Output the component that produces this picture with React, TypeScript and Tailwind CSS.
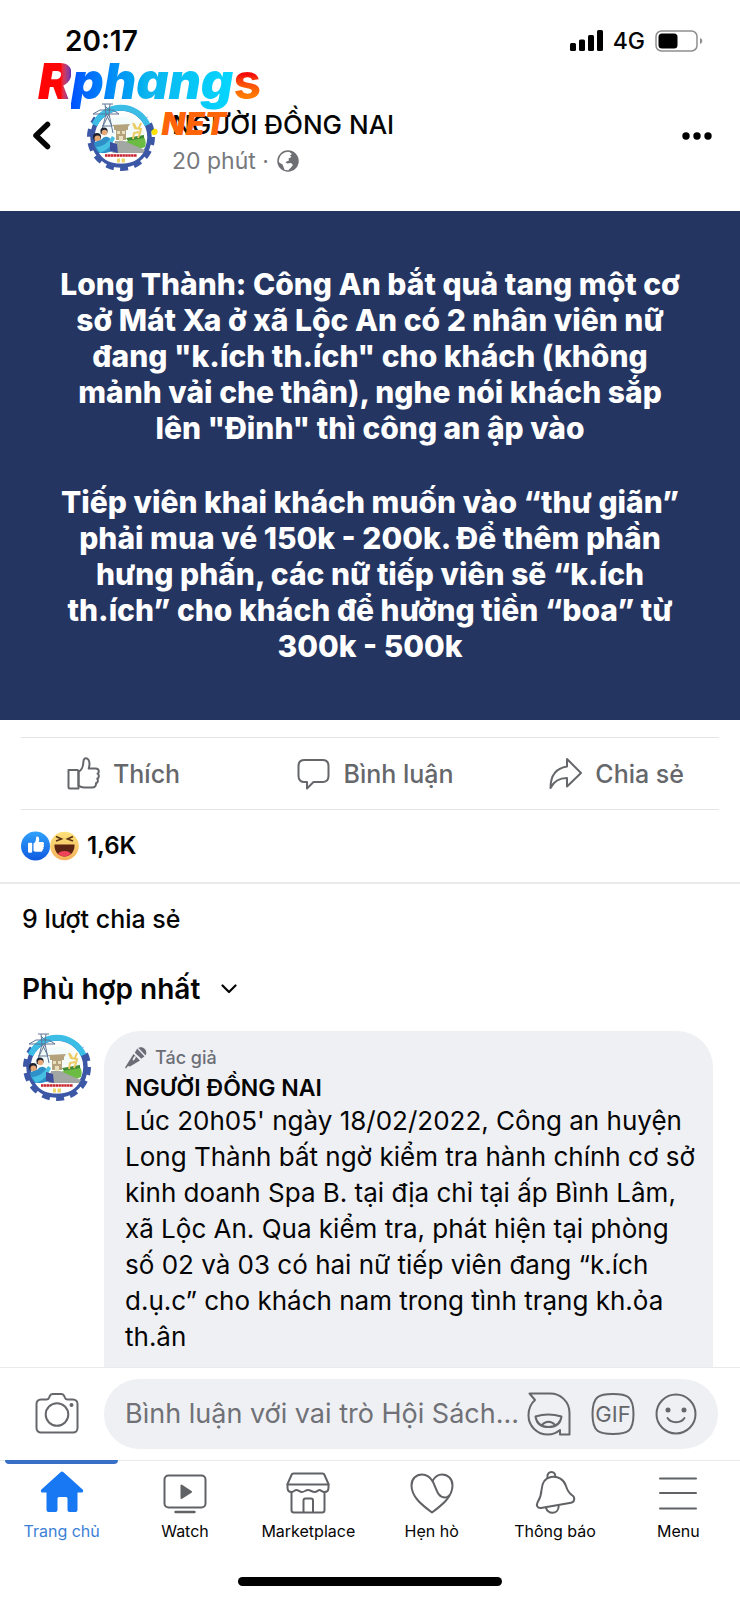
import type { ReactNode } from 'react'

const TABS = [
  { label: 'Trang chủ', icon: <HomeIcon />, active: true },
  { label: 'Watch', icon: <WatchIcon /> },
  { label: 'Marketplace', icon: <MarketIcon /> },
  { label: 'Hẹn hò', icon: <HeartIcon /> },
  { label: 'Thông báo', icon: <BellIcon /> },
  { label: 'Menu', icon: <MenuIcon /> },
]

type IconProps = {
  size: string
  box: string
  strokeWidth?: number
  children: ReactNode
}

function Icon({ size, box, strokeWidth = 2, children }: IconProps) {
  return (
    <svg
      className={`${size} shrink-0`}
      viewBox={box}
      fill="none"
      stroke="currentColor"
      strokeWidth={strokeWidth}
      strokeLinecap="round"
      strokeLinejoin="round"
      aria-hidden="true"
    >
      {children}
    </svg>
  )
}

function HomeIcon() {
  return (
    <Icon size="size-11" box="0 0 44 44">
      <path
        d="M20.5 1.2a2.4 2.4 0 0 1 3 0L42.6 18.6c1 1 .6 2.9-1 2.9H37.5V39a2 2 0 0 1-2 2H29.5a2 2 0 0 1-2-2V27.5a1.5 1.5 0 0 0-1.5-1.5H19a1.5 1.5 0 0 0-1.5 1.5V39a2 2 0 0 1-2 2H8.5a2 2 0 0 1-2-2V21.5H2.4c-1.6 0-2-1.9-1-2.9Z"
        fill="currentColor"
        stroke="none"
      />
    </Icon>
  )
}

function WatchIcon() {
  return (
    <Icon size="size-11" box="0 0 44 44">
      <rect x="1.5" y="4.5" width="41" height="32" rx="4" />
      <path d="M12.5 41h19" strokeWidth="2.4" />
      <path d="M18.5 14.5v12.5l9.5-6.2Z" fill="currentColor" />
    </Icon>
  )
}

function MarketIcon() {
  return (
    <Icon size="size-11" box="0 0 44 44">
      <path d="M7.5 2.500h29c1 0 1.800.6 2 1.500L42.500 13v3.500c0 2.500-1.500 4.500-4 4.500s-3.500-2-5-2-2.500 2-5 2-4-2-6.500-2-3.500 2-6 2-3.500-2-5.500-2-3 2-5 2c-2.500 0-4-2-4-4.500V13L5.500 4c.2-.9 1-1.500 2-1.500Z" />
      <path d="M1.500 13.500h41M5.500 21v18a2.500 2.500 0 0 0 2.500 2.500h28a2.500 2.500 0 0 0 2.500-2.500V21M17.500 41V29.500c0-1.200.8-2 2-2H25c1.200 0 2 .8 2 2V41" />
    </Icon>
  )
}

function HeartIcon() {
  return (
    <Icon size="size-11" box="0 0 44 44">
      <path d="M22 41.500C12 34 1.500 26 1.500 14.500 1.500 8 6 3.500 12 3.500c5 0 8 2.500 10.500 6.500C25 5.500 28 3.500 32 3.500c6 0 10.500 4.500 10.500 11C42.500 26 32 34 22 41.500Z" />
      <path d="M22.500 10c3.500 6 4.500 16.500 12.500 16.500 2 0 3.200-.8 4-2" />
    </Icon>
  )
}

function BellIcon() {
  return (
    <Icon size="size-11" box="0 0 44 44">
      <path d="M14.500 6.500c-.5-3.500 1.500-5.500 4-5.500s4.200 2 3.700 5" />
      <path d="M8.500 19C9 11.500 12.500 7 18 6c7-1.200 13 2.500 15 9 1.300 4.500 2.500 7 6.500 9.500 2.600 1.800 2.400 6.800-1.500 7.300L8 37c-3.500.5-5-2.500-3.500-5.500C7 27.500 8.200 25 8.500 19Z" />
      <path d="M13 37c1 3 3.200 4.800 6.500 4.800s6-2.300 6.200-6.500" />
    </Icon>
  )
}

function MenuIcon() {
  return (
    <Icon size="size-11" box="0 0 44 44">
      <path d="M4 7.500h36M4 22h36M4 37.500h36" />
    </Icon>
  )
}

const THUMB =
  'M11.500 14.500c3-1 4.500-5 4.800-8.500.2-2.500 0-4.500 2.200-4.800C21 1 22.500 3.500 22.500 7c0 1.800-.4 3.200-.8 4.500h6.800c2 0 3.300 1.200 3.300 2.800 0 1.300-.6 2-1.200 2.400.9.600 1.300 1.500 1.200 2.600-.1 1.200-.7 2-1.500 2.400.5.7.7 1.500.5 2.500-.2 1.100-1 1.800-1.800 2.100.2 2.500-1 4.200-4 4.200h-8c-2.500 0-4-.8-5.500-2Z'

function ThumbIcon() {
  return (
    <Icon size="size-[33px]" box="0 0 33 33">
      <path d="M1.500 13h8.500c.8 0 1.500.6 1.500 1.500v17H3c-.9 0-1.500-.6-1.500-1.500Z" />
      <path d={THUMB} />
    </Icon>
  )
}

function BubbleIcon() {
  return (
    <Icon size="size-[33px]" box="0 0 33 33">
      <path d="M7.500 3h18c3.800 0 6 2.200 6 6v10c0 3.800-2.200 6-6 6h-9L10 31.500V25H7.500c-3.800 0-6-2.200-6-6V9c0-3.800 2.200-6 6-6Z" />
    </Icon>
  )
}

function ShareIcon() {
  return (
    <Icon size="size-[33px]" box="0 0 33 33">
      <path d="M18 2l14 14-14 13.500V21C10 21 5 24 1.500 31 1.500 18 8 11 18 9.500Z" />
    </Icon>
  )
}

function PageLogo() {
  return (
    <svg
      className="size-[70px] shrink-0"
      viewBox="0 0 70 70"
      aria-label="Người Đồng Nai"
    >
      <circle cx="35" cy="36" r="32" fill="none" stroke="#3b57a6" strokeWidth="4" strokeDasharray="8 6.360" />
      <circle cx="35" cy="36" r="28.500" fill="#fdfdfb" stroke="#3b57a6" strokeWidth="4.500" />
      <path d="M10 17A31 31 0 0 1 60 17" fill="none" stroke="#fff" strokeWidth="7" />
      <path d="M8.500 24A29 29 0 0 1 61.500 24" fill="none" stroke="#3bbde6" strokeWidth="6" />
      <path d="M11 34a25 25 0 0 1 48 0Z" fill="#f3fafa" />
      <path d="M38 41l20-5c2 3 2 7 1 10l-8 3Z" fill="#6cbb42" />
      <path d="M40 37l18-3v3l-16 3Z" fill="#3f8a35" />
      <path d="M29 40h9l21 9-3 5H26Z" fill="#a2a7a3" />
      <path d="M28 26h14v3H28ZM30 29h10v10H30ZM26 24l18-1-2 3H28Z" fill="#b3a27c" />
      <path d="M31 30h3v3h-3ZM36 30h3v3h-3ZM33 35h4v5h-4Z" fill="#eadfbd" />
      <path d="M47 22l2 5 6 1-1 4-2 5M47 38l1-6 5-1M53 27l2-5M50 27l-2-4" fill="none" stroke="#ebcb62" strokeWidth="2" />
      <path
        d="M16 3h11M7 13h26M19 3l1 10-5 20M24 3l-1 10 4 19M20 13l6 12M23 13l-6 12M16 25h10M7 13l7-4h13l6 4M19 5l5 5"
        fill="none"
        stroke="#5e7596"
        strokeWidth="1"
      />
      <circle cx="18" cy="30" r="3.600" fill="#1d2230" />
      <circle cx="18.500" cy="31.500" r="2.800" fill="#e7a878" />
      <circle cx="11" cy="36" r="4" fill="#1d2230" />
      <circle cx="11.500" cy="37.500" r="3" fill="#e7a878" />
      <path d="M8 42c3-3 7-2 8-4 3-4 8-2 9 1l3 11-13 3C11 51 9 47 8 42Z" fill="#2f8fc9" />
      <path d="M10 46c6 0 12-4 16-11l3 2c-3 8-9 13-15 15Z" fill="#45bfe2" />
      <path d="M24 41l7 2 1 9-8-2Z" fill="#3d4f9c" />
      <path d="M13 52h44c-5 8-12 10.500-22 10.500S18 60 13 52Z" fill="#fff" />
      <path d="M19 54.500h32" stroke="#c8202d" strokeWidth="2.500" strokeDasharray="2.500 .4" />
      <path d="M31 57.500h3v4h-3ZM35.500 57.500h3.500v4h-3.500Z" fill="#ecd36b" />
    </svg>
  )
}

function Watermark() {
  return (
    <div className="pointer-events-none absolute left-[38px] top-[51px] font-black italic" aria-hidden="true">
      <p className="flex text-[50px] leading-[60px]">
        <span className="bg-linear-to-r from-[#ff0505] from-70% to-[#6b2bb0] bg-clip-text text-transparent">
          R
        </span>
        <span className="bg-linear-to-r from-[#0050ff] via-[#0cb4ee] via-45% to-[#05d8ff] bg-clip-text pr-1 text-transparent">
          phang
        </span>
        <span className="-ml-1 bg-linear-to-b from-[#f50a0a] from-40% to-[#ff7a00] to-75% bg-clip-text font-bold not-italic text-transparent">
          s
        </span>
      </p>
      <p className="absolute left-[112px] top-[55px] text-[31px] leading-9 text-[#ff6408]">
        <span className="text-[#ffe100]">.</span>NET
      </p>
    </div>
  )
}

function StatusBar() {
  return (
    <div className="flex h-20 items-center justify-between pl-[65px] pr-[37px] pt-px">
      <span className="text-[28px] font-semibold leading-8">20:17</span>
      <div className="flex items-center gap-[10px]">
        <svg className="h-[22px] w-[33px]" viewBox="0 0 33 22" aria-hidden="true">
          <rect x="0" y="13" width="6" height="8" rx="1.500" />
          <rect x="9" y="9.500" width="6" height="11.500" rx="1.500" />
          <rect x="18" y="5" width="6" height="16" rx="1.500" />
          <rect x="27" y="0" width="6" height="21" rx="1.500" />
        </svg>
        <span className="text-[23px] font-medium leading-8">4G</span>
        <svg className="h-[22px] w-12" viewBox="0 0 48 22" aria-hidden="true">
          <rect x="1" y="1" width="41" height="20" rx="5.500" fill="none" stroke="#8e8e8e" strokeWidth="1.500" />
          <rect x="3.500" y="3.500" width="19" height="15" rx="3.500" />
          <path d="M45 8c3 1 3 5 0 6Z" fill="#8e8e8e" />
        </svg>
      </div>
    </div>
  )
}

function PostHeader() {
  return (
    <header className="flex h-[131px] items-start pl-[33px] pr-7 pt-[21px]">
      <button type="button" aria-label="Quay lại" className="mt-5 h-8 w-[18px]">
        <svg className="h-8 w-[18px]" viewBox="0 0 18 32" fill="none" stroke="currentColor" strokeWidth="5.500" strokeLinecap="round" strokeLinejoin="round">
          <path d="M14.500 3.500 3 14.500l11.500 11" />
        </svg>
      </button>
      <div className="ml-[35px]">
        <PageLogo />
      </div>
      <div className="ml-4 mt-2">
        <h1 className="text-[26px] font-medium leading-8">NGƯỜI ĐỒNG NAI</h1>
        <p className="mt-1 flex items-center gap-2 text-[23px] leading-8 text-[#77797d]">
          20 phút ·
          <svg className="size-[22px]" viewBox="0 0 22 22" aria-label="Công khai">
            <circle cx="11" cy="11" r="10" fill="#fff" stroke="#6d6f73" strokeWidth="1.500" />
            <path
              d="M12 1.500 15 4l-2 1.500 1.500 1.500-3 1.500.5 2-3.500 1.500 1.500 1.500 4-.5 2 2-2 2.500-3 3c6 0 10-4 10-9.500S18 1.500 12 1.500ZM1.500 12l4 2.500 2 5C3.500 18.500 1.500 16 1.500 12Z"
              fill="#6d6f73"
            />
          </svg>
        </p>
      </div>
      <button type="button" aria-label="Tùy chọn khác" className="ml-auto mt-5 h-8">
        <svg className="h-8 w-[30px]" viewBox="0 0 30 32">
          <circle cx="4" cy="15" r="3.700" />
          <circle cx="15" cy="15" r="3.700" />
          <circle cx="26" cy="15" r="3.700" />
        </svg>
      </button>
    </header>
  )
}

function Reactions() {
  return (
    <div className="flex h-[74px] items-center border-b-2 border-[#e9eaec] px-[21px]">
      <svg className="h-[30px] w-[58px]" viewBox="0 0 58 30" aria-hidden="true">
        <defs>
          <linearGradient id="like" x1="0" y1="0" x2="0" y2="1">
            <stop offset="0" stopColor="#2fa2fb" />
            <stop offset="1" stopColor="#1059e0" />
          </linearGradient>
          <linearGradient id="haha" x1="0" y1="0" x2="0" y2="1">
            <stop offset="0" stopColor="#fce27a" />
            <stop offset="1" stopColor="#f5b25b" />
          </linearGradient>
          <clipPath id="mouth">
            <path d="M33.500 13.500h20c.5 7-4 12-10 12s-10.500-5-10-12Z" />
          </clipPath>
        </defs>
        <circle cx="43.500" cy="15" r="14.300" fill="url(#haha)" />
        <path d="m35 5.500 5.500 2.500-5.500 2M52 5.500l-5.500 2.500 5.500 2" fill="none" stroke="#5a3413" strokeWidth="1.600" />
        <g clipPath="url(#mouth)">
          <rect x="32" y="13" width="24" height="13" fill="#5b2311" />
          <ellipse cx="43.500" cy="24.500" rx="7" ry="4.500" fill="#ef4458" />
        </g>
        <circle cx="14.500" cy="15" r="14.500" fill="url(#like)" />
        <g transform="translate(6.500 5) scale(.52)" fill="#fff">
          <rect x="1" y="13" width="8" height="19" rx="2" />
          <path d={THUMB} />
        </g>
      </svg>
      <span className="ml-2 text-2xl font-semibold leading-8">1,6K</span>
    </div>
  )
}

function Comment() {
  return (
    <article className="flex pl-[22px] pr-[27px]">
      <PageLogo />
      <div className="ml-3 flex-1 rounded-t-[36px] bg-[#eff0f4] pb-3 pl-[21px] pt-3">
        <p className="flex items-center gap-2 text-lg font-medium leading-[30px] text-[#6b6e76]">
          <svg className="size-[22px]" viewBox="0 0 22 22" fill="currentColor" aria-hidden="true">
            <path d="M1 21.500 0 20.500 8.500 7l6.500 6.500L5 19.500 3 19ZM9.800 5.800l2-3.500c2.500-3 6-2.500 8-.3s2.200 5.500-.5 7.500l-3 2.200Z" />
            <path d="m13 1.500 7.500 8" stroke="#eff0f4" strokeWidth="1.300" />
            <path d="m8.500 12.500 1.500-2.500" stroke="#eff0f4" strokeWidth="1.800" strokeLinecap="round" />
          </svg>
          Tác giả
        </p>
        <h2 className="text-[23px] font-semibold leading-[30px]">NGƯỜI ĐỒNG NAI</h2>
        <p className="text-[26px] leading-9">
          Lúc 20h05' ngày 18/02/2022, Công an huyện
          <br />
          Long Thành bất ngờ kiểm tra hành chính cơ sở
          <br />
          kinh doanh Spa B. tại địa chỉ tại ấp Bình Lâm,
          <br />
          xã Lộc An. Qua kiểm tra, phát hiện tại phòng
          <br />
          số 02 và 03 có hai nữ tiếp viên đang “k.ích
          <br />
          d.ụ.c” cho khách nam trong tình trạng kh.ỏa
          <br />
          th.ân
        </p>
      </div>
    </article>
  )
}

function Composer() {
  return (
    <form className="flex items-center border-t border-[#e9eaec] bg-white py-[11px] pl-[35px] pr-[22px] text-[#65676b]">
      <button type="button" aria-label="Máy ảnh">
        <Icon size="size-11" box="0 0 44 44">
          <path d="M6 7.500h5.500c1.500 0 2-.6 2.500-1.700l.6-1.500C15.200 2.800 16 2 17.500 2h9c1.500 0 2.300.8 2.900 2.300l.6 1.500c.5 1.100 1 1.700 2.500 1.700H38c2.800 0 4.500 2 4.500 4.500v24c0 2.500-1.700 4.500-4.500 4.500H6c-2.800 0-4.500-2-4.500-4.500V12c0-2.500 1.700-4.500 4.500-4.500Z" />
          <circle cx="22" cy="22.500" r="11.300" />
          <circle cx="36.500" cy="13" r="1" fill="currentColor" />
        </Icon>
      </button>
      <div className="ml-[25px] flex h-[70px] min-w-0 flex-1 items-center rounded-full bg-[#eff0f4] px-[21px]">
        <input
          type="text"
          aria-label="Viết bình luận"
          placeholder="Bình luận với vai trò Hội Sách..."
          className="min-w-0 flex-1 bg-transparent text-[27px] leading-9 outline-none placeholder:text-[#6f7176]"
        />
        <div className="flex shrink-0 items-center gap-5">
          <button type="button" aria-label="Nhãn dán avatar">
            <Icon size="size-11" box="0 0 44 44">
              <path d="M2.500 1.500H23C34 1.500 42.500 10 42.500 21v21.500h-9.500V38c-3.500 3-7.500 4.500-12 4.500C10 42.500 1.500 34 1.500 23.500c0-7 3-12.500 6.500-15.500Z" />
              <path d="M8.500 24.500c8-2.500 17.500-2.500 26 0-1 7-6 10.500-13 10.500s-12-3.500-13-10.500Z" />
              <path d="M15 33c3.500-4.500 9.500-4.500 13 0" />
            </Icon>
          </button>
          <button type="button" className="relative flex size-11 items-center justify-center" aria-label="Ảnh GIF">
            <span className="absolute inset-0">
              <Icon size="size-11" box="0 0 44 44">
                <path d="M22 2c14 0 20.500 2 20.500 20S36 42 22 42 1.500 40 1.500 22 8 2 22 2Z" />
              </Icon>
            </span>
            <span className="text-[22px] leading-6">GIF</span>
          </button>
          <button type="button" aria-label="Biểu tượng cảm xúc">
            <Icon size="size-[42px]" box="0 0 42 42">
              <circle cx="21" cy="21" r="19.500" />
              <circle cx="13" cy="17" r="1.500" fill="currentColor" />
              <circle cx="29" cy="17" r="1.500" fill="currentColor" />
              <path d="M12.500 25c3.500 5.500 13.500 5.500 17 0" />
            </Icon>
          </button>
        </div>
      </div>
    </form>
  )
}

function TabBar() {
  return (
    <nav className="grid grid-cols-6 border-t border-[#e9eaec] bg-white">
      {TABS.map((tab) => (
        <a
          key={tab.label}
          href="#"
          className={`relative flex flex-col items-center pt-[10px] text-base leading-6 ${
            tab.active ? 'text-[#3b7fd6]' : 'text-[#050505]'
          }`}
        >
          {tab.active && (
            <span className="absolute -top-px left-[5px] right-[5px] h-1 rounded-b-sm bg-[#3a6fc8]" />
          )}
          <span className={tab.active ? 'text-[#1877f2]' : 'text-[#606266]'}>
            {tab.icon}
          </span>
          <span className="mt-1">{tab.label}</span>
        </a>
      ))}
    </nav>
  )
}

const App = () => {
  return (
    <div className="relative bg-white font-['Inter',sans-serif] text-[#050505]">
      <StatusBar />
      <PostHeader />
      <Watermark />

      <section className="bg-[#243561] pb-[56px] pt-[55px] text-center text-[30px] font-extrabold leading-9 text-white">
        <p>
          Long Thành: Công An bắt quả tang một cơ
          <br />
          sở Mát Xa ở xã Lộc An có 2 nhân viên nữ
          <br />
          đang "k.ích th.ích" cho khách (không
          <br />
          mảnh vải che thân), nghe nói khách sắp
          <br />
          lên "Đỉnh" thì công an ập vào
        </p>
        <p className="mt-[38px]">
          Tiếp viên khai khách muốn vào “thư giãn”
          <br />
          phải mua vé 150k - 200k. Để thêm phần
          <br />
          hưng phấn, các nữ tiếp viên sẽ “k.ích
          <br />
          th.ích” cho khách để hưởng tiền “boa” từ
          <br />
          300k - 500k
        </p>
      </section>

      <div className="mx-[21px] mt-[17px] grid h-[73px] grid-cols-[1fr_auto_1fr] items-center border-y border-[#e4e5e8] pl-[46px] pr-[35px] text-[25px] font-medium leading-8 text-[#65676b]">
        <button type="button" className="flex items-center gap-[13px]">
          <ThumbIcon />
          Thích
        </button>
        <button type="button" className="flex items-center gap-[13px]">
          <BubbleIcon />
          Bình luận
        </button>
        <button type="button" className="flex items-center justify-end gap-[13px]">
          <ShareIcon />
          Chia sẻ
        </button>
      </div>

      <Reactions />

      <p className="px-[22px] pt-[19px] text-[25px] font-medium leading-8">9 lượt chia sẻ</p>
      <div className="flex items-center px-[22px] pb-6 pt-9">
        <select aria-label="Sắp xếp bình luận" className="appearance-none bg-transparent text-[28px] font-semibold leading-9">
          <option>Phù hợp nhất</option>
        </select>
        <svg className="ml-5 h-[10px] w-4" viewBox="0 0 16 10" fill="none" stroke="currentColor" strokeWidth="2.200" strokeLinecap="round" strokeLinejoin="round" aria-hidden="true">
          <path d="m1.500 1.500 6.500 6.500 6.500-6.500" />
        </svg>
      </div>

      <Comment />
      <Composer />
      <TabBar />

      <div className="flex justify-center pb-[14px] pt-[34px]">
        <div className="h-[9px] w-[264px] rounded-full bg-black" />
      </div>
    </div>
  )
}

export default App
